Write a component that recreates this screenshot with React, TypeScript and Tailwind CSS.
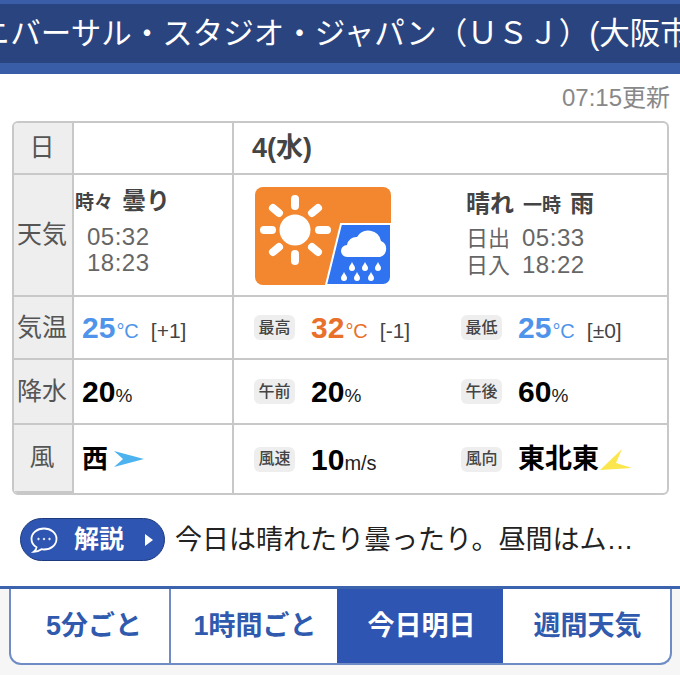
const font = { fontFamily: '"Liberation Sans", "Noto Sans CJK JP", sans-serif' };

const Badge = ({ children }: { children: string }) => (
  <span className="flex h-[25px] w-[41px] shrink-0 items-center justify-center rounded-md bg-[#eeeeee] text-[16px] font-medium text-[#444]">
    {children}
  </span>
);

const Temp = ({ value, diff, color }: { value: string; diff: string; color: string }) => (
  <span className={`flex items-baseline ${color}`}>
    <span className="text-[30px] font-bold">{value}</span>
    <span className="ml-[1px] text-[20px]">°C</span>
    <span className="ml-[12px] text-[21px] text-[#444]">{diff}</span>
  </span>
);

const Percent = ({ value }: { value: string }) => (
  <span className="flex items-baseline text-black">
    <span className="text-[30px] font-bold">{value}</span>
    <span className="text-[19px] font-medium text-[#222]">%</span>
  </span>
);

const Label = ({ children, className }: { children: string; className: string }) => (
  <div className={`flex items-center justify-center border-r-2 border-b-2 border-[#c8c8c8] bg-[#eeeeee] pr-[2px] text-[25px] text-[#555] ${className}`}>
    {children}
  </div>
);

const WeatherIcon = () => (
  <svg width="136" height="98" viewBox="0 0 136 98">
    <rect width="136" height="98" rx="8" fill="#f2872f" />
    <path d="M86 37H136V90a8 8 0 0 1-8 8H71Z" fill="#2f73f0" stroke="#fff" strokeWidth="2" />
    <circle cx="40" cy="43" r="15.5" fill="#fff" />
    <g stroke="#fff" strokeWidth="8" strokeLinecap="round">
      <path d="M40 12V19M40 67V74M9 43H17M64 43H72M18 21L24 26M57 60L63 65M63 21L57 26M24 60L18 65" />
    </g>
    <path d="M92 70a6 6 0 0 1 0-12 9.500 9.500 0 0 1 10-8 13 13 0 0 1 24 4 8.500 8.500 0 0 1-1 16Z" fill="#fff" />
    <g fill="#fff">
      {[[97, 75], [110, 75], [123, 75], [89, 85], [102, 85], [116, 85]].map(([x, y]) => (
        <path key={`${x}-${y}`} d="M0 0C1 2.500 3 4 3 6A3 3 0 0 1-3 6C-3 4-1 2.500 0 0Z" transform={`translate(${x} ${y})`} />
      ))}
    </g>
  </svg>
);

const App = () => {
  return (
    <div className="h-[675px] w-[680px] overflow-hidden bg-white" style={font}>
      {/* Title bar */}
      <div className="h-[74px] border-y-[4px] border-b-[11px] border-[#3a5da8] bg-[#2a4480]">
        <div className="flex h-[58px] items-center justify-end overflow-hidden whitespace-nowrap pt-[1px] text-[30.5px] text-white">
          <span className="mr-[-21px] shrink-0">ユニバーサル・スタジオ・ジャパン（ＵＳＪ）(大阪市)</span>
        </div>
      </div>

      <div className="flex h-[47px] items-center justify-end pr-[10px] text-[24px] text-[#888]">07:15更新</div>

      {/* Forecast table */}
      <div className="mx-[12px] grid h-[374px] w-[657px] grid-cols-[60px_160px_1fr] grid-rows-[52px_122px_63px_65px_1fr] overflow-hidden rounded-md border-2 border-[#c8c8c8]">
        <Label className="">日</Label>
        <div className="border-r-2 border-b-2 border-[#c8c8c8]" />
        <div className="flex items-center border-b-2 border-[#c8c8c8] pl-[18px] text-[27px] font-bold text-[#444]">4(水)</div>

        <Label className="">天気</Label>
        <div className="border-r-2 border-b-2 border-[#c8c8c8] pl-[1px] pt-[8px]">
          <div className="flex items-baseline font-bold text-[#444]">
            <span className="text-[19px]">時々</span>
            <span className="ml-[9px] text-[24px]">曇り</span>
          </div>
          <div className="ml-[12px] mt-[5px] text-[24px] leading-[26px] tracking-[0.5px] text-[#666]">
            <div>05:32</div>
            <div>18:23</div>
          </div>
        </div>
        <div className="flex border-b-2 border-[#c8c8c8] pl-[21px] pt-[12px]">
          <WeatherIcon />
          <div className="ml-[75px] mt-[-1px]">
            <div className="flex items-baseline font-bold text-[#444]">
              <span className="text-[24px]">晴れ</span>
              <span className="ml-[9px] text-[19px]">一時</span>
              <span className="ml-[9px] text-[24px]">雨</span>
            </div>
            <div className="mt-[3px] text-[22px] leading-[26px] text-[#666]">
              <div className="flex items-baseline">日出<span className="ml-[12px] text-[24px] tracking-[0.5px]">05:33</span></div>
              <div className="flex items-baseline">日入<span className="ml-[12px] text-[24px] tracking-[0.5px]">18:22</span></div>
            </div>
          </div>
        </div>

        <Label className="">気温</Label>
        <div className="flex items-center border-r-2 border-b-2 border-[#c8c8c8] pl-[8px]">
          <Temp value="25" diff="[+1]" color="text-[#4f94ea]" />
        </div>
        <div className="grid grid-cols-[207px_1fr] border-b-2 border-[#c8c8c8] pl-[20px]">
          <div className="flex items-center gap-[16px]">
            <Badge>最高</Badge>
            <Temp value="32" diff="[-1]" color="text-[#e8702a]" />
          </div>
          <div className="flex items-center gap-[16px]">
            <Badge>最低</Badge>
            <Temp value="25" diff="[±0]" color="text-[#4f94ea]" />
          </div>
        </div>

        <Label className="">降水</Label>
        <div className="flex items-center border-r-2 border-b-2 border-[#c8c8c8] pl-[8px]">
          <Percent value="20" />
        </div>
        <div className="grid grid-cols-[207px_1fr] border-b-2 border-[#c8c8c8] pl-[20px]">
          <div className="flex items-center gap-[16px]">
            <Badge>午前</Badge>
            <Percent value="20" />
          </div>
          <div className="flex items-center gap-[16px]">
            <Badge>午後</Badge>
            <Percent value="60" />
          </div>
        </div>

        <Label className="border-b-0">風</Label>
        <div className="flex items-center border-r-2 border-[#c8c8c8] pl-[8px]">
          <span className="text-[26px] font-bold text-black">西</span>
          <svg width="31" height="18" viewBox="0 0 31 18" className="ml-[6px]">
            <path d="M0 1L30 9L0 17L9 9Z" fill="#4db3ee" />
          </svg>
        </div>
        <div className="grid grid-cols-[207px_1fr] pl-[20px]">
          <div className="flex items-center gap-[16px]">
            <Badge>風速</Badge>
            <span className="flex items-baseline text-black">
              <span className="text-[30px] font-bold">10</span>
              <span className="text-[20px] font-medium text-[#222]">m/s</span>
            </span>
          </div>
          <div className="flex items-center gap-[16px]">
            <Badge>風向</Badge>
            <span className="text-[27px] font-bold text-black">東北東</span>
            <svg width="34" height="24" viewBox="0 0 34 24" className="ml-[-16px]">
              <path d="M1 23L23 2L17 16L33 21Z" fill="#fbe64e" />
            </svg>
          </div>
        </div>
      </div>

      {/* Commentary */}
      <div className="flex h-[91px] items-center pb-[2px] pl-[20px]">
        <div className="flex h-[43px] w-[145px] items-center rounded-full border border-[#1d3a7c] bg-[#2e55b2] pl-[9px] text-white">
          <svg width="28" height="28" viewBox="0 0 28 28" fill="none" stroke="#fff" strokeWidth="1.800">
            <path d="M14 2.500C7 2.500 1.500 7 1.500 13C1.500 16.500 3.500 19.500 6.500 21.300C6.300 23 5 25 3.800 25.800C7 25.800 10 24.300 11.500 23.200C12.300 23.400 13.200 23.500 14 23.500C21 23.500 26.500 19 26.500 13C26.500 7 21 2.500 14 2.500Z" />
            <circle cx="8.500" cy="13" r="0.800" fill="#fff" strokeWidth="0.800" />
            <circle cx="14" cy="13" r="0.800" fill="#fff" strokeWidth="0.800" />
            <circle cx="19.500" cy="13" r="0.800" fill="#fff" strokeWidth="0.800" />
          </svg>
          <span className="ml-[16px] text-[25px] font-bold">解説</span>
          <svg width="8" height="12" viewBox="0 0 8 12" className="ml-[21px]">
            <path d="M0 0L8 6L0 12Z" fill="#fff" />
          </svg>
        </div>
        <span className="ml-[10px] whitespace-nowrap pt-[2px] text-[27px] text-[#222]">今日は晴れたり曇ったり。昼間はム…</span>
      </div>

      {/* Tabs */}
      <div className="h-[89px] border-t-[3px] border-[#3c63ad] bg-[#f6f6f6] px-[9px]">
        <div className="grid h-[76px] w-[663px] grid-cols-[160px_166px_166px_1fr] overflow-hidden rounded-b-xl border-x-2 border-b-2 border-[#6f8cc4] bg-white text-[27px] font-bold text-[#2f5aad]">
          <div className="flex items-center justify-center border-r-2 border-[#6f8cc4] pl-[8px]">5分ごと</div>
          <div className="flex items-center justify-center pl-[2px]">1時間ごと</div>
          <div className="flex items-center justify-center bg-[#2e55b2] pl-[3px] text-white">今日明日</div>
          <div className="flex items-center justify-center pl-[2px]">週間天気</div>
        </div>
      </div>
    </div>
  );
};

export default App;
